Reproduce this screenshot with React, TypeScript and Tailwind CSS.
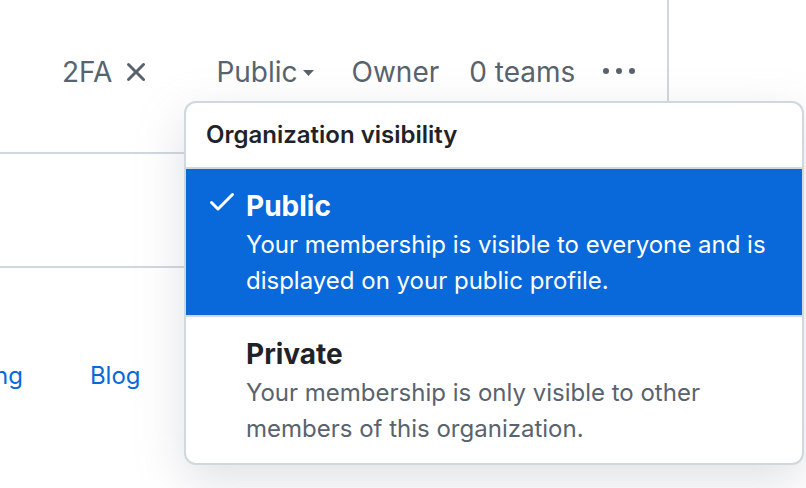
import React from "react";

const font = { fontFamily: "Inter, 'Noto Sans', 'Liberation Sans', sans-serif" };

function XIcon() {
  return (
    <svg width="32" height="32" viewBox="0 0 16 16" fill="#59636e">
      <path d="M3.72 3.72a.75.75 0 0 1 1.06 0L8 6.94l3.22-3.22a.749.749 0 0 1 1.275.326.749.749 0 0 1-.215.734L9.06 8l3.22 3.22a.749.749 0 0 1-.326 1.275.749.749 0 0 1-.734-.215L8 9.06l-3.22 3.22a.751.751 0 0 1-1.042-.018.751.751 0 0 1-.018-1.042L6.94 8 3.72 4.78a.75.75 0 0 1 0-1.06Z" />
    </svg>
  );
}

function Kebab() {
  return (
    <svg width="32" height="32" viewBox="0 0 16 16" fill="#59636e">
      <path d="M8 9a1.5 1.5 0 1 0 0-3 1.5 1.5 0 0 0 0 3ZM1.5 9a1.5 1.5 0 1 0 0-3 1.5 1.5 0 0 0 0 3Zm13 0a1.5 1.5 0 1 0 0-3 1.5 1.5 0 0 0 0 3Z" />
    </svg>
  );
}

function Check() {
  return (
    <svg width="32" height="32" viewBox="0 0 16 16" fill="#ffffff">
      <path d="M13.78 4.22a.75.75 0 0 1 0 1.06l-7.25 7.25a.75.75 0 0 1-1.06 0L2.22 9.28a.751.751 0 0 1 .018-1.042.751.751 0 0 1 1.042-.018L6 10.94l6.72-6.72a.75.75 0 0 1 1.06 0Z" />
    </svg>
  );
}

export default function App() {
  return (
    <div className="relative w-[806px] h-[488px] overflow-hidden bg-white" style={font}>
      {/* background table */}
      <div className="w-[669px]">
        <div className="h-[154px] border-b-2 border-r-2 border-[#d0d7de] pt-[56px] pl-[62px] flex items-start text-[28px] leading-[32px] text-[#59636e]">
          <span>2FA</span>
          <span className="ml-[8px]"><XIcon /></span>
          <span className="ml-[64px]">Public</span>
          <svg className="ml-[5px] mt-[14px]" width="11" height="6" viewBox="0 0 11 6">
            <path d="M0 0h11L5.5 6Z" fill="#59636e" />
          </svg>
          <span className="ml-[38px]">Owner</span>
          <span className="ml-[30px]">0 teams</span>
          <span className="ml-[28px]"><Kebab /></span>
        </div>
        <div className="h-[114px] border-b-2 border-[#d0d7de]" />
        <div className="pt-[90px] flex text-[24px] leading-[36px] text-[#0969da]">
          <span className="-ml-[6px]">ng</span>
          <span className="ml-[67px]">Blog</span>
        </div>
      </div>

      {/* dropdown menu */}
      <div className="absolute left-[184px] top-[101px] w-[620px] rounded-[12px] border-2 border-[#d0d7de] bg-white overflow-hidden shadow-[0_16px_48px_rgba(140,149,159,0.28)]">
        <div className="h-[66px] px-[20px] flex items-center border-b-2 border-[#d0d7de] text-[24px] font-semibold text-[#1f2328]">
          Organization visibility
        </div>
        <div className="flex bg-[#0969da] pl-[20px] pr-[20px] py-[16px] border-b-2 border-[#d0d7de]">
          <div className="w-[32px] h-[32px] shrink-0">
            <Check />
          </div>
          <div className="ml-[8px]">
            <div className="text-[28px] leading-[42px] font-bold text-white">Public</div>
            <div className="text-[24px] leading-[36px] text-white">
              Your membership is visible to everyone and is displayed on your public profile.
            </div>
          </div>
        </div>
        <div className="flex pl-[20px] pr-[20px] py-[16px]">
          <div className="w-[32px] h-[32px] shrink-0" />
          <div className="ml-[8px]">
            <div className="text-[28px] leading-[42px] font-bold text-[#1f2328]">Private</div>
            <div className="text-[24px] leading-[36px] text-[#59636e]">
              Your membership is only visible to other members of this organization.
            </div>
          </div>
        </div>
      </div>
    </div>
  );
}
